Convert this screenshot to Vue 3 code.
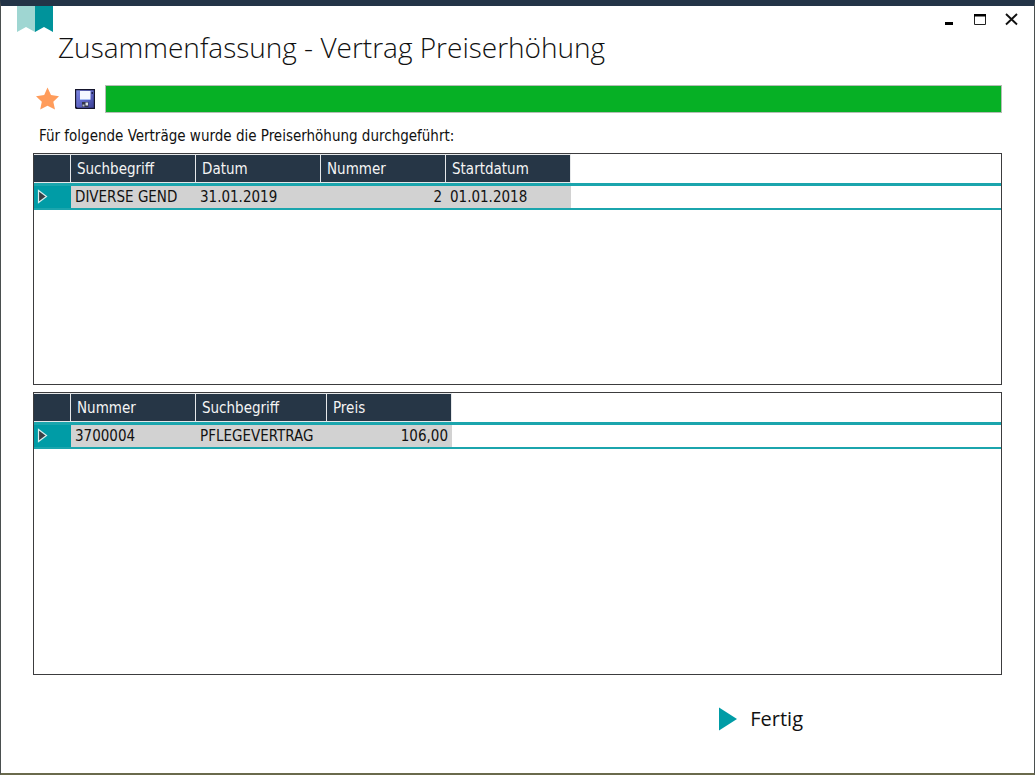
<script setup>
const contracts = {
  label: 'Verträge',
  columns: [
    { title: 'Suchbegriff', size: 'c125' },
    { title: 'Datum', size: 'c125' },
    { title: 'Nummer', size: 'c125', numeric: true },
    { title: 'Startdatum', size: 'c125' },
  ],
  rows: [['DIVERSE GEND', '31.01.2019', '2', '01.01.2018']],
}
const items = {
  label: 'Positionen',
  columns: [
    { title: 'Nummer', size: 'c125' },
    { title: 'Suchbegriff', size: 'c131' },
    { title: 'Preis', size: 'c125', numeric: true },
  ],
  rows: [['3700004', 'PFLEGEVERTRAG', '106,00']],
}
const grids = [
  { ...contracts, area: 'upper' },
  { ...items, area: 'lower' },
]
</script>

<template>
  <main class="window">
    <header class="head">
      <svg class="ribbon" width="36" height="26" viewBox="0 0 36 26" aria-hidden="true">
        <path d="M0 0H18V26L9 21L0 26Z" fill="#9fd6d2" />
        <path d="M18 0H36V26L27 21L18 26Z" fill="#00939b" />
      </svg>
      <h1>Zusammenfassung - Vertrag Preiserhöhung</h1>
      <div class="controls">
        <button type="button" aria-label="Minimieren">
          <svg width="14" height="14" viewBox="0 0 14 14"><path d="M3 10H11V13H3Z" fill="#000" /></svg>
        </button>
        <button type="button" aria-label="Maximieren">
          <svg width="14" height="14" viewBox="0 0 14 14">
            <path d="M1.500 2V12.500H12.500V2" fill="none" stroke="#222" />
            <path d="M1 2H13V4.500H1Z" fill="#000" />
          </svg>
        </button>
        <button type="button" aria-label="Schließen">
          <svg width="14" height="14" viewBox="0 0 14 14">
            <path d="M2 2L13 12.500M13 2L2 12.500" stroke="#111" stroke-width="1.900" />
          </svg>
        </button>
      </div>
    </header>

    <div class="tools">
      <button type="button" aria-label="Favorit">
        <svg width="24" height="24" viewBox="0 0 24 24">
          <path d="M11.500 0.500L15 8L23 9.200L17.300 14.700L19 22.500L11.500 18.800L4.200 22.500L5.800 14.700L0 9.200L8.200 8Z" fill="#ff9c5b" />
        </svg>
      </button>
      <button type="button" aria-label="Speichern">
        <svg width="20" height="20" viewBox="0 0 20 20">
          <defs>
            <linearGradient id="disk" x1="0" y1="0" x2="1" y2="1">
              <stop offset="0" stop-color="#7c86e0" />
              <stop offset="0.500" stop-color="#5f66c6" />
              <stop offset="1" stop-color="#3b4096" />
            </linearGradient>
          </defs>
          <path d="M0 0H20V20H1L0 19Z" fill="#15152c" />
          <path d="M1.200 1.200H18.800V18.800H2.500L1.200 17.500Z" fill="url(#disk)" />
          <path d="M5 2H15.500V10H5Z" fill="#f4f8ff" />
          <path d="M5 10H15.500V11H5Z" fill="#a9c0f4" />
          <path d="M16.500 3H18V5H16.500Z" fill="#20244f" />
          <path d="M7 13H13.500V18H7Z" fill="#34374c" />
          <path d="M10.500 13.500H13V16.500H10.500Z" fill="#dfe3e8" />
          <path d="M7.500 15.500H9.500V17.500H7.500Z" fill="#b4bac4" />
        </svg>
      </button>
      <div class="progress" role="progressbar" aria-label="Fortschritt" aria-valuenow="100"></div>
    </div>

    <p class="intro">Für folgende Verträge wurde die Preiserhöhung durchgeführt:</p>

    <section v-for="grid in grids" :key="grid.area" class="grid" :class="grid.area">
      <table :aria-label="grid.label">
        <colgroup>
          <col class="marker" />
          <col v-for="c in grid.columns" :key="c.title" :class="c.size" />
          <col />
        </colgroup>
        <thead>
          <tr>
            <th></th>
            <th v-for="c in grid.columns" :key="c.title" scope="col">{{ c.title }}</th>
            <td></td>
          </tr>
        </thead>
        <tbody>
          <tr v-for="row in grid.rows" :key="row[0]">
            <td class="current">
              <svg width="12" height="16" viewBox="0 0 12 16" aria-hidden="true">
                <path d="M1.500 1.500L9.500 7.500L1.500 13.500Z" fill="#3b3f44" stroke="#d9eeee" stroke-width="1.200" />
              </svg>
            </td>
            <td v-for="(v, i) in row" :key="i" class="value" :class="{ numeric: grid.columns[i].numeric }">{{ v }}</td>
            <td></td>
          </tr>
        </tbody>
      </table>
    </section>

    <footer>
      <button type="button" class="done">
        <svg width="18" height="24" viewBox="0 0 18 24" aria-hidden="true">
          <path d="M0 0.500L18 12L0 23.500Z" fill="#009ca6" />
        </svg>
        Fertig
      </button>
    </footer>
  </main>
</template>

<style>
body {
  background: #fff;
}
</style>

<style scoped>
.window {
  box-sizing: border-box;
  display: flex;
  flex-direction: column;
  min-height: 100vh;
  padding: 0 32px;
  border: solid #4a4f4f;
  border-width: 6px 1px 2px;
  border-top-color: #233447;
  border-bottom-color: #6a6a4c;
  background: #fff;
  color: #111;
  font: 15px/20px "DejaVu Sans Condensed", "DejaVu Sans", sans-serif;
}
button {
  display: flex;
  align-items: center;
  padding: 0;
  border: 0;
  background: none;
  color: inherit;
  font: inherit;
}
.head {
  display: flex;
  align-items: flex-start;
  height: 79px;
  margin: 0 -16px;
}
.ribbon {
  flex: none;
}
h1 {
  flex: 1;
  margin: 20px 0 0 5px;
  font: 300 28px/42px "Open Sans", "Noto Sans", sans-serif;
  white-space: nowrap;
}
.controls {
  display: flex;
  gap: 17px;
  padding-top: 6px;
}
.tools {
  display: flex;
  align-items: center;
  gap: 10px;
  padding-left: 3px;
}
.tools button:first-child {
  margin-right: 5px;
}
.progress {
  box-sizing: border-box;
  flex: 1;
  height: 28px;
  border: 1px solid #b5bdb5;
  background: #06b025;
}
.intro {
  margin: 13px 6px 7px;
}
.grid {
  min-height: 100px;
  border: 1px solid #3c3c3e;
}
.upper {
  flex: 230 0 0;
  margin-bottom: 7px;
}
.lower {
  flex: 281 0 0;
}
table {
  width: 100%;
  table-layout: fixed;
  border-spacing: 0;
}
.marker {
  width: 37px;
}
.c125 {
  width: 125px;
}
.c131 {
  width: 131px;
}
th,
td {
  padding: 0;
}
th {
  height: 27px;
  padding-left: 6px;
  border: solid #e6e8ea;
  border-width: 1px 1px 1px 0;
  background: #263646;
  color: #f4f4f4;
  font-weight: 400;
  text-align: left;
}
tbody td {
  height: 22px;
  border: solid #1ba5ad;
  border-width: 3px 0 2px;
}
.current {
  padding-left: 3px;
  background: #009ca6;
}
.current svg {
  display: block;
}
.value {
  padding: 0 4px;
  background: #d2d2d2;
  white-space: nowrap;
}
.numeric {
  text-align: right;
}
footer {
  display: flex;
  height: 98px;
  justify-content: flex-end;
  align-items: flex-start;
  padding: 30px 199px 0 0;
  box-sizing: border-box;
}
.done {
  gap: 13px;
  font: 20px/28px "Open Sans", "Noto Sans", sans-serif;
}
</style>
